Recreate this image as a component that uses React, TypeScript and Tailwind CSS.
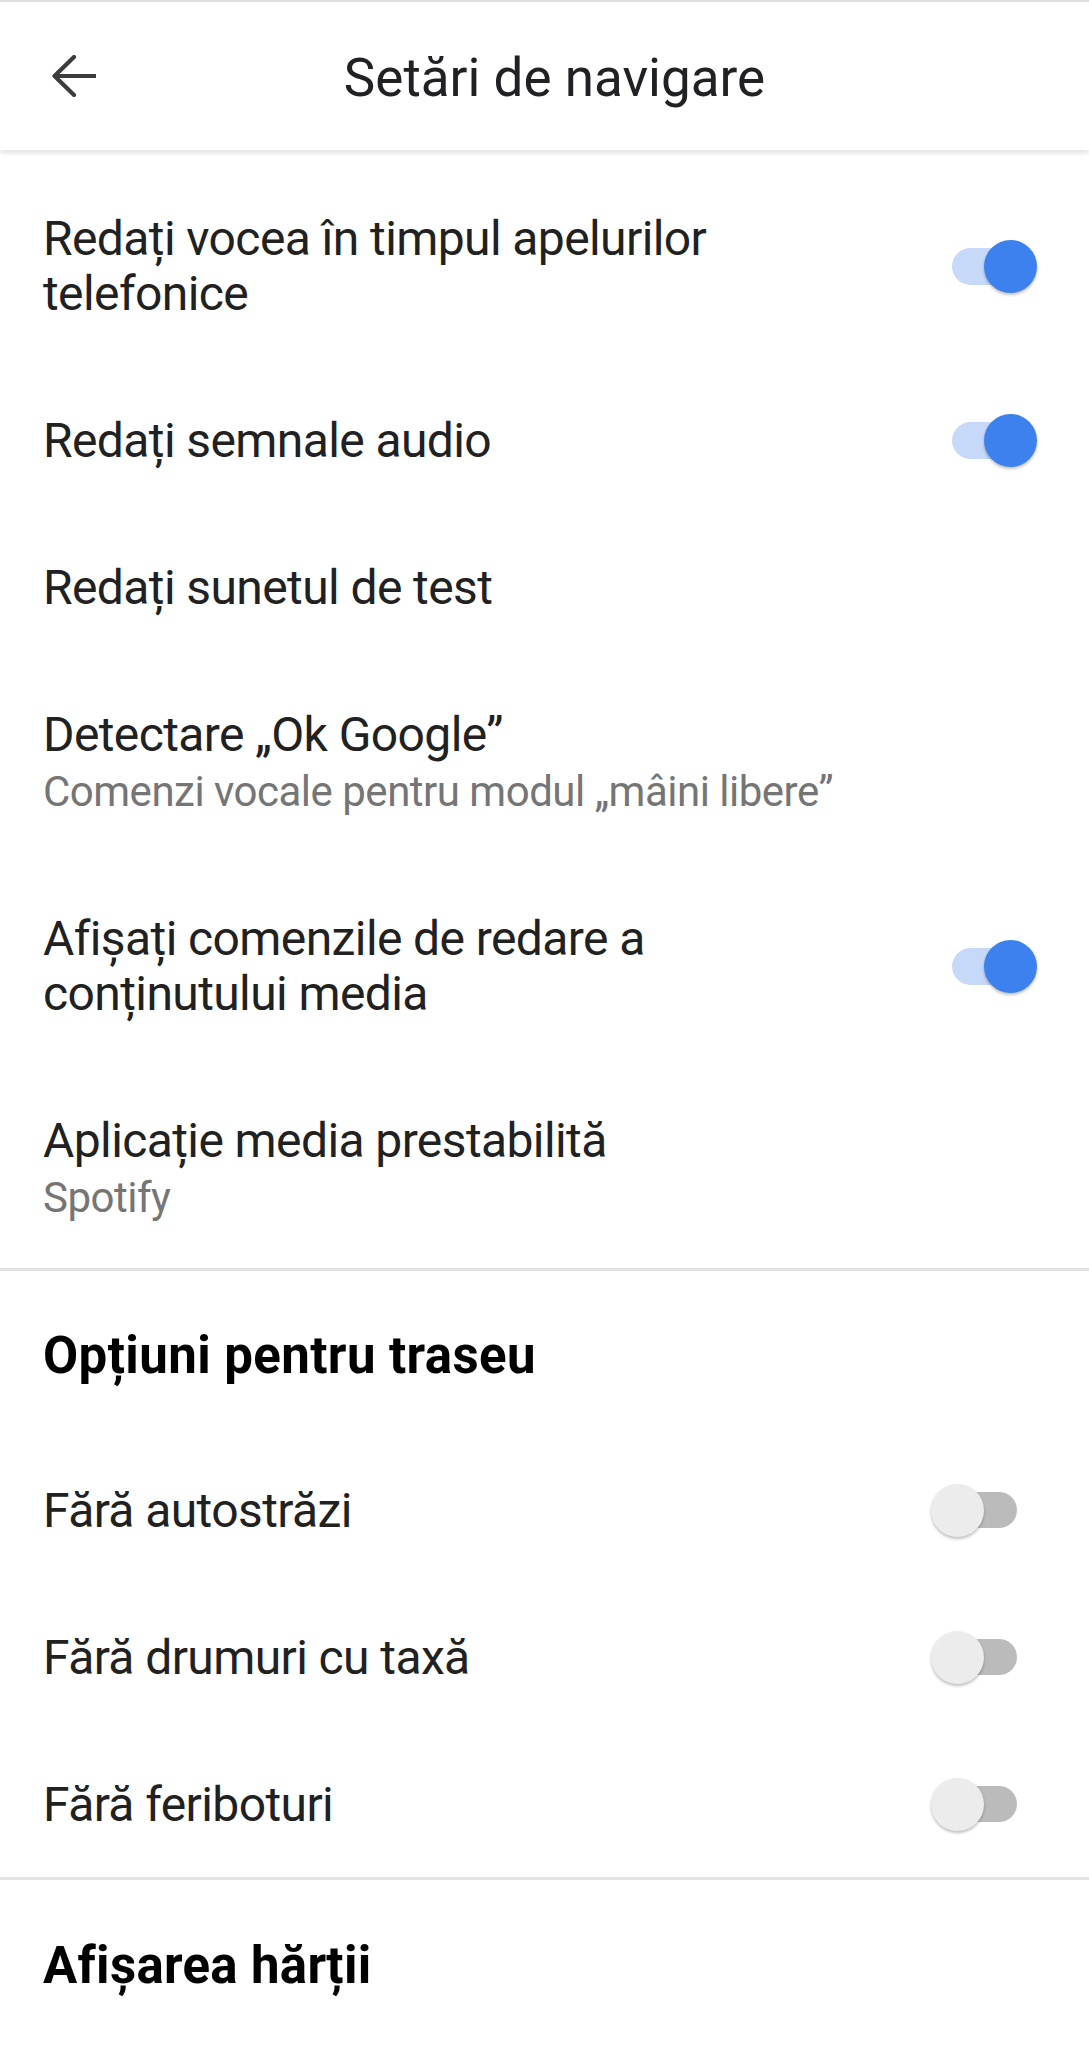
import React from 'react'

interface Row {
  title: string
  subtitle?: string
  toggle?: 'on' | 'off'
}

const audioRows: Row[] = [
  { title: 'Redați vocea în timpul apelurilor telefonice', toggle: 'on' },
  { title: 'Redați semnale audio', toggle: 'on' },
  { title: 'Redați sunetul de test' },
  { title: 'Detectare „Ok Google”', subtitle: 'Comenzi vocale pentru modul „mâini libere”' },
  { title: 'Afișați comenzile de redare a conținutului media', toggle: 'on' },
  { title: 'Aplicație media prestabilită', subtitle: 'Spotify' },
]

const routeRows: Row[] = [
  { title: 'Fără autostrăzi', toggle: 'off' },
  { title: 'Fără drumuri cu taxă', toggle: 'off' },
  { title: 'Fără feriboturi', toggle: 'off' },
]

function SwitchOn() {
  return (
    <div className="relative w-[85px] h-[53px] mr-[52px] flex-shrink-0">
      <div className="absolute left-0 top-[8px] w-[80px] h-[37px] rounded-full bg-[#c6d9f8]" />
      <div className="absolute right-0 top-0 w-[53px] h-[53px] rounded-full bg-[#3d81ee] shadow-[0_2px_3px_rgba(0,0,0,0.25)]" />
    </div>
  )
}

function SwitchOff() {
  return (
    <div className="relative w-[86px] h-[53px] mr-[72px] flex-shrink-0">
      <div className="absolute right-0 top-[8px] w-[80px] h-[36px] rounded-full bg-[#bbbbbb]" />
      <div className="absolute left-0 top-0 w-[53px] h-[53px] rounded-full bg-[#ececec] shadow-[0_2px_3px_rgba(0,0,0,0.25)]" />
    </div>
  )
}

function SettingRow({ row }: { row: Row }) {
  return (
    <div className="flex items-center py-[46px] pl-[43px]">
      <div className="flex-1 min-w-0 pr-[50px]">
        <div className="text-[48px] leading-[55px] tracking-[-0.6px] text-[#212121] max-w-[800px]">{row.title}</div>
        {row.subtitle && (
          <div className="mt-[2px] text-[42px] leading-[55px] tracking-[-0.5px] text-[#757575]">{row.subtitle}</div>
        )}
      </div>
      {row.toggle === 'on' && <SwitchOn />}
      {row.toggle === 'off' && <SwitchOff />}
    </div>
  )
}

export default function App() {
  return (
    <div className="w-[1089px] min-h-[2048px] bg-white overflow-hidden" style={{ fontFamily: 'Roboto, "Noto Sans", sans-serif' }}>
      {/* Toolbar */}
      <div className="relative z-10 h-[150px] flex items-center border-t-[2px] border-[#dedede] bg-white shadow-[0_3px_5px_rgba(0,0,0,0.12)]">
        <div className="w-[128px] flex-shrink-0 pl-[52px]">
          <svg width="44" height="42" viewBox="0 0 44 42" fill="none">
            <path d="M43 21H3M22 2L2.5 21 22 40" stroke="#3c3c3c" strokeWidth="4.2" strokeLinecap="round" strokeLinejoin="round" />
          </svg>
        </div>
        <div className="flex-1 text-center pt-[4px] text-[53px] leading-[60px] text-[#202124]">Setări de navigare</div>
        <div className="w-[108px] flex-shrink-0" />
      </div>

      {/* Audio & voice */}
      <div className="pt-[15px]">
        {audioRows.map((row, i) => (
          <SettingRow key={i} row={row} />
        ))}
      </div>

      <div className="h-[3px] bg-[#e2e2e2] -mt-[3px]" />

      {/* Route options */}
      <div className="pl-[43px] pt-[55px] pb-[51px] text-[51px] leading-[60px] tracking-[0.4px] font-bold text-black">Opțiuni pentru traseu</div>
      {routeRows.map((row, i) => (
        <SettingRow key={i} row={row} />
      ))}

      <div className="h-[3px] bg-[#e2e2e2] -mt-[1px]" />

      {/* Map display */}
      <div className="pl-[43px] pt-[56px] pb-[54px] text-[51px] leading-[60px] tracking-[0.3px] font-bold text-black">Afișarea hărții</div>
    </div>
  )
}
